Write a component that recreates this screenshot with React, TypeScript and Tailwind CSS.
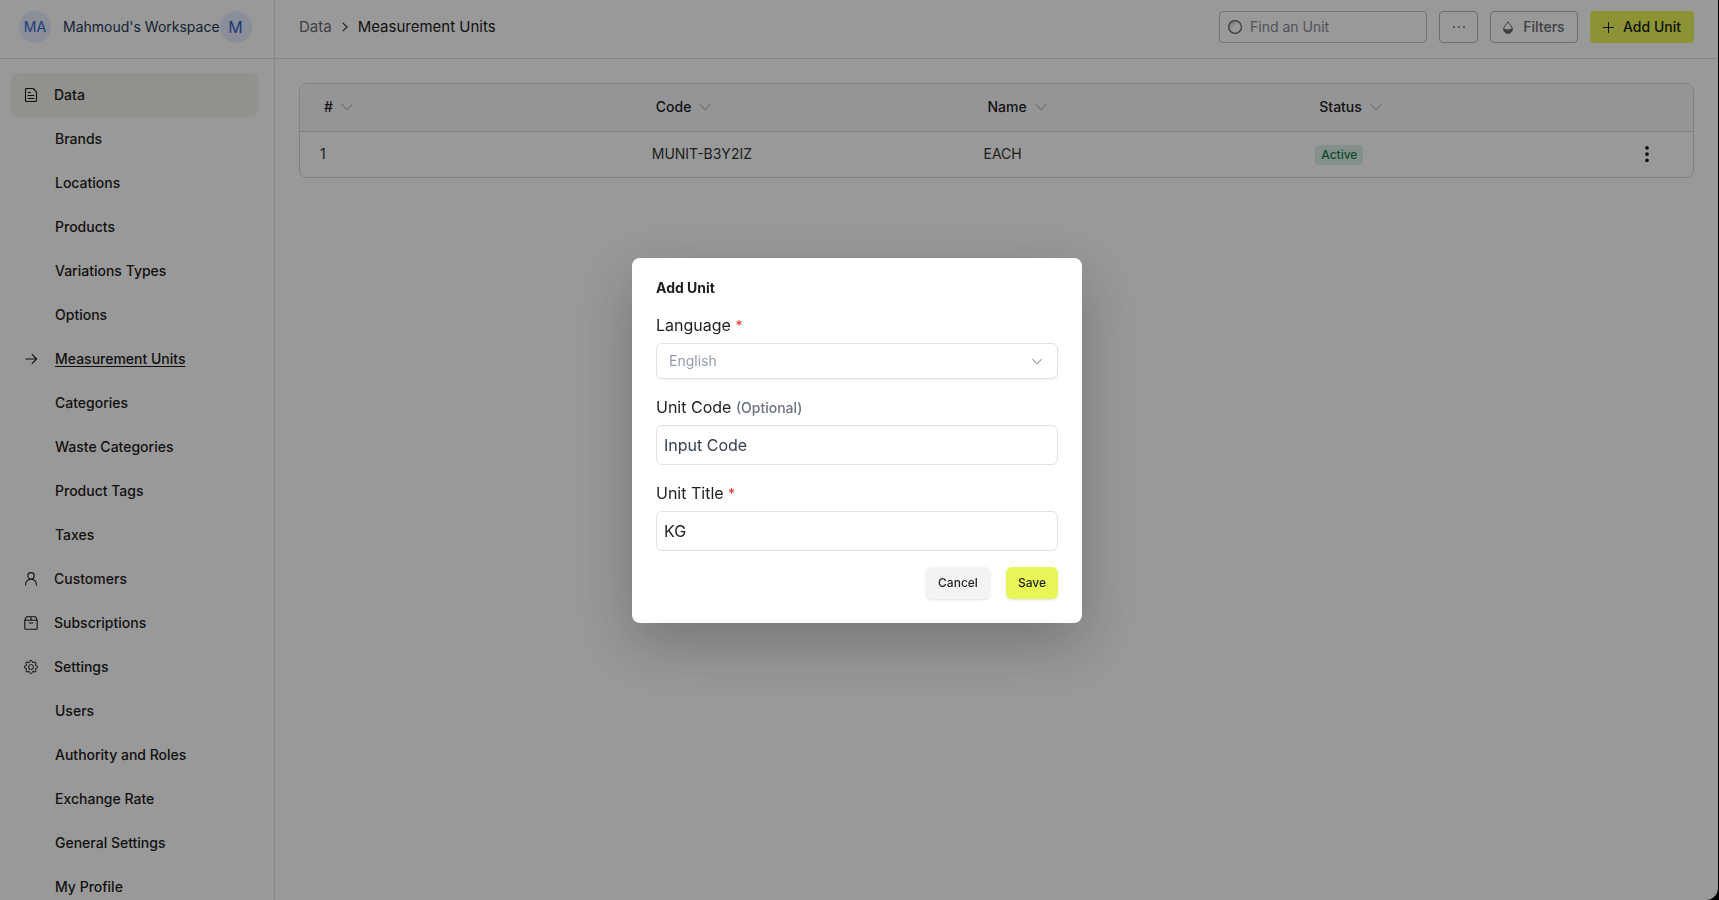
import { useState } from "react";
import { BsGear, BsThreeDotsVertical } from "react-icons/bs";

type NavItem = {
  label: string;
  icon?: "file" | "arrow" | "user" | "box" | "gear";
  top?: boolean;
  active?: boolean;
  current?: boolean;
};

const navigation: NavItem[] = [
  { label: "Data", icon: "file", top: true, active: true },
  { label: "Brands" },
  { label: "Locations" },
  { label: "Products" },
  { label: "Variations Types" },
  { label: "Options" },
  { label: "Measurement Units", icon: "arrow", current: true },
  { label: "Categories" },
  { label: "Waste Categories" },
  { label: "Product Tags" },
  { label: "Taxes" },
  { label: "Customers", icon: "user", top: true },
  { label: "Subscriptions", icon: "box", top: true },
  { label: "Settings", icon: "gear", top: true },
  { label: "Users" },
  { label: "Authority and Roles" },
  { label: "Exchange Rate" },
  { label: "General Settings" },
  { label: "My Profile" },
];

const columns = ["#", "Code", "Name", "Status"];

// Outline icons on a 14px grid
const iconPaths = {
  file: "M1.500 1.500c0-.6.4-1 1-1h6.700l3.300 3.300v8.700c0 .6-.4 1-1 1h-9c-.6 0-1-.4-1-1zM3.700 4.500h3M3.700 7.500h6.600M3.700 10.500h6.600",
  arrow: "M1.500 7h11M7.800 2.200 12.600 7l-4.800 4.800",
  user: "M10.200 3.800a3.200 3.200 0 1 1-6.400 0 3.200 3.200 0 0 1 6.400 0ZM1.600 13.500v-1a5.400 5.400 0 0 1 10.800 0v1",
  box: "M.8 4.200v8c0 .6.4 1 1 1h10.400c.6 0 1-.4 1-1v-8M.8 4.200 2 1.500c.2-.4.5-.7 1-.7h8c.5 0 .8.3 1 .7l1.200 2.700M.8 4.200h12.400M7 .8v3.400M4.800 7h4.400",
};

function ChevronIcon({ className }: { className: string }) {
  return (
    <svg aria-hidden="true" className={className} viewBox="0 0 12 8" fill="none" stroke="currentColor" strokeWidth="1.2">
      <path d="M.5 1.200 6 6.700l5.500-5.500" />
    </svg>
  );
}

function NavIcon({ name }: { name: NavItem["icon"] }) {
  if (!name) return null;
  if (name === "gear") return <BsGear aria-hidden="true" size={14} />;
  return (
    <svg
      aria-hidden="true"
      width="14"
      height="14"
      viewBox="0 0 14 14"
      fill="none"
      stroke="currentColor"
      strokeWidth="1.100"
      strokeLinejoin="round"
    >
      <path d={iconPaths[name]} />
    </svg>
  );
}

function Sidebar() {
  return (
    <aside className="flex w-[275px] shrink-0 flex-col border-r border-[#e0e0e2]">
      <div className="flex items-center border-b border-[#dcdcde] pt-[11px] pb-[15px] pl-[19px]">
        <span className="flex size-8 items-center justify-center rounded-full bg-[#e6edff] text-sm text-[#3662c9]">
          MA
        </span>
        <span className="ml-3 text-sm whitespace-nowrap text-[#253858]">
          Mahmoud's Workspace
        </span>
        <span className="flex size-8 items-center justify-center rounded-full bg-[#e6edff] text-base text-[#3662c9]">
          M
        </span>
      </div>
      <nav aria-label="Primary navigation" className="pt-[14px] pr-4 pl-[11px]">
        {navigation.map((item) => (
          <a
            className={`flex h-11 items-center rounded-lg pl-[13px] text-sm font-medium text-[#1c1c1c] ${
              item.active ? "bg-[#f2f2ec]" : ""
            }`}
            href="#"
            key={item.label}
          >
            <span className={`flex items-center ${item.top ? "w-[30px]" : "w-[31px]"}`}>
              <NavIcon name={item.icon} />
            </span>
            <span className={item.current ? "underline underline-offset-2" : ""}>
              {item.label}
            </span>
          </a>
        ))}
      </nav>
    </aside>
  );
}

function Toolbar() {
  return (
    <header className="flex items-center justify-between border-b border-[#dcdcde] px-6 pt-[11px] pb-[15px]">
      <div className="flex items-center text-[15px]">
        <a className="text-[#6b6b6f]" href="#">
          Data
        </a>
        <svg aria-hidden="true" className="mx-[10px]" width="6" height="10" viewBox="0 0 6 10" fill="none" stroke="#333" strokeWidth="1.2">
          <path d="m.8.8 4.200 4.200L.8 9.200" />
        </svg>
        <span className="text-[#1c1c1c]">Measurement Units</span>
      </div>
      <div className="flex items-center gap-3">
        <label className="flex h-8 w-[208px] items-center gap-2 rounded border border-[#c4c4ca] px-2">
          <svg aria-hidden="true" width="14" height="14" viewBox="0 0 14 14">
            <defs>
              <linearGradient id="search-fill" x1="0" y1="0" x2="1" y2="1">
                <stop offset="0" stopColor="#b4b4b8" />
                <stop offset="0.500" stopColor="#fff" />
              </linearGradient>
            </defs>
            <circle cx="7" cy="7" r="6.400" fill="url(#search-fill)" stroke="#5a5d66" strokeWidth="1.200" />
          </svg>
          <input
            aria-label="Find an Unit"
            className="min-w-0 flex-1 text-sm outline-none placeholder:text-[#8b8b92]"
            placeholder="Find an Unit"
            type="text"
          />
        </label>
        <button
          aria-label="More actions"
          className="flex h-8 w-[39px] items-center justify-center rounded border border-[#b4b4bc] text-[#6b6b6f]"
          type="button"
        >
          <svg aria-hidden="true" width="14" height="4" viewBox="0 0 14 4" fill="currentColor">
            <circle cx="2" cy="2" r="1" />
            <circle cx="7" cy="2" r="1" />
            <circle cx="12" cy="2" r="1" />
          </svg>
        </button>
        <button
          className="flex h-8 w-[88px] items-center justify-center gap-[10px] rounded border border-[#b4b4bc] text-sm font-medium text-[#6b6b6f]"
          type="button"
        >
          <svg aria-hidden="true" width="10" height="13" viewBox="0 0 10 13">
            <path d="M5 .8C6.300 2.800 9.400 5.600 9.400 8.200a4.400 4.200 0 0 1-8.800 0C.6 5.600 3.700 2.800 5 .8Z" fill="none" stroke="currentColor" />
            <path d="M.6 8.400c2-1.200 3 .6 4.800 0 1.400-.5 2.500-.9 4-.6a4.400 4.400 0 0 1-8.800.6Z" fill="currentColor" />
          </svg>
          Filters
        </button>
        <button
          className="flex h-8 w-[104px] items-center justify-center gap-[9px] rounded bg-[#e8f658] text-sm font-medium text-[#1c1c1c]"
          type="button"
        >
          <svg aria-hidden="true" width="11" height="11" viewBox="0 0 11 11" stroke="currentColor">
            <path d="M5.500 0v11M0 5.500h11" />
          </svg>
          Add Unit
        </button>
      </div>
    </header>
  );
}

function UnitsTable() {
  return (
    <div className="m-6 overflow-hidden rounded-lg border border-[#d8d8dc]">
      <table className="w-full table-fixed text-left text-sm text-[#333]">
        <thead>
          <tr className="h-[47px] border-b border-[#d8d8e0] bg-[#f8f8fc]">
            {columns.map((column) => (
              <th className="pl-6 font-medium text-[#1c1c1c]" key={column}>
                <span className="flex items-center gap-2">
                  {column}
                  <ChevronIcon className="h-2 w-3 text-[#c0c0c4]" />
                </span>
              </th>
            ))}
            <th aria-label="Actions" className="w-[66px]" />
          </tr>
        </thead>
        <tbody>
          <tr className="h-[46px]">
            <td className="pl-5">1</td>
            <td className="pl-5">MUNIT-B3Y2IZ</td>
            <td className="pl-5">EACH</td>
            <td className="pl-5">
              <span className="inline-flex h-5 items-center rounded-sm bg-[#dcf0e6] px-[6px] text-xs font-medium text-[#1c7a50]">
                Active
              </span>
            </td>
            <td className="pl-[10px]">
              <button aria-label="Row actions" className="flex text-[#1c1c1c]" type="button">
                <BsThreeDotsVertical aria-hidden="true" size={20} />
              </button>
            </td>
          </tr>
        </tbody>
      </table>
    </div>
  );
}

function AddUnitDialog() {
  const [code, setCode] = useState("");
  const [title, setTitle] = useState("KG");

  return (
    <div className="fixed inset-0 flex items-center justify-center bg-black/40 pr-[5px] pb-[19px]">
      <form
        aria-labelledby="dialog-title"
        aria-modal="true"
        className="flex w-[450px] flex-col gap-4 rounded-lg bg-white p-6 text-[#1c1f23] shadow-[0_20px_60px_rgba(16,20,32,0.28)]"
        onSubmit={(event) => event.preventDefault()}
        role="dialog"
      >
        <h2 className="mb-[3px] text-sm leading-3 font-bold" id="dialog-title">
          Add Unit
        </h2>

        <div className="flex flex-col gap-[6px]">
          <label className="text-base" htmlFor="language">
            Language <span className="text-sm text-[#e02d2d]">*</span>
          </label>
          <div className="relative">
            <select
              className="h-9 w-full appearance-none rounded-md border border-[#e2e2e4] bg-white px-3 text-sm text-[#949cac] shadow-xs"
              id="language"
            >
              <option>English</option>
            </select>
            <ChevronIcon className="pointer-events-none absolute top-[15px] right-4 h-[7px] w-[10px] text-[#707070]" />
          </div>
        </div>

        <div className="flex flex-col gap-[6px]">
          <label className="text-base" htmlFor="unit-code">
            Unit Code <span className="text-sm font-medium text-[#6b7280]">(Optional)</span>
          </label>
          <input
            className="h-10 rounded-md border border-[#e2e2e4] px-[7px] text-base placeholder:text-[#374151]"
            id="unit-code"
            onChange={(event) => setCode(event.target.value)}
            placeholder="Input Code"
            type="text"
            value={code}
          />
        </div>

        <div className="flex flex-col gap-[6px]">
          <label className="text-base" htmlFor="unit-title">
            Unit Title <span className="text-sm text-[#e02d2d]">*</span>
          </label>
          <input
            className="h-10 rounded-md border border-[#e2e2e4] px-[7px] text-base"
            id="unit-title"
            onChange={(event) => setTitle(event.target.value)}
            type="text"
            value={title}
          />
        </div>

        <div className="flex justify-end gap-4">
          <button className="h-8 rounded-md bg-[#f4f3f2] px-3 text-xs font-medium shadow-sm" type="button">
            Cancel
          </button>
          <button className="h-8 rounded-md bg-[#e8f658] px-3 text-xs font-medium shadow-sm" type="submit">
            Save
          </button>
        </div>
      </form>
    </div>
  );
}

export default function App() {
  return (
    <div className="h-screen bg-black pr-px font-['Inter',sans-serif]">
      <div className="flex h-full overflow-hidden rounded-br-xl bg-white">
        <Sidebar />
        <main className="min-w-0 flex-1">
          <Toolbar />
          <UnitsTable />
        </main>
      </div>
      <AddUnitDialog />
    </div>
  );
}
